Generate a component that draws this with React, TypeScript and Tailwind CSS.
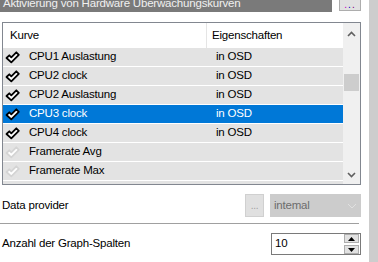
import React from "react";

const rows = [
  { name: "CPU1 Auslastung", prop: "in OSD", on: true },
  { name: "CPU2 clock", prop: "in OSD", on: true },
  { name: "CPU2 Auslastung", prop: "in OSD", on: true },
  { name: "CPU3 clock", prop: "in OSD", on: true, selected: true },
  { name: "CPU4 clock", prop: "in OSD", on: true },
  { name: "Framerate Avg", prop: "", on: false },
  { name: "Framerate Max", prop: "", on: false },
  { name: "", prop: "", on: false },
];

const Check = ({ on }: { on: boolean }) => (
  <svg width="15" height="13" viewBox="0 0 15 13" className="shrink-0">
    <path
      d="M1.5 7 L4.3 4.3 L6.3 6.3 L11.3 1.3 L13.8 3.8 L6.3 11.3 Z"
      fill="white"
      stroke={on ? "#000" : "#d4d4d4"}
      strokeWidth="1.8"
      strokeLinejoin="round"
    />
  </svg>
);

export default function App() {
  return (
    <div
      className="flex w-[378px] h-[262px] overflow-hidden bg-white text-[11.5px] tracking-[-0.2px] text-black"
      style={{ fontFamily: '"Liberation Sans", Arial, sans-serif' }}
    >
      <div className="w-[369px] flex flex-col">
        {/* title bar */}
        <div className="flex h-[12px] items-start">
          <div className="w-[332px] h-[12px] bg-[#7a7a7a] overflow-hidden pl-[3px]">
            <div className="mt-[-5px] leading-[16px] text-[#f0f0f0] whitespace-nowrap">
              Aktivierung von Hardware Überwachungskurven
            </div>
          </div>
          <div className="ml-[7px] w-[22px] h-[11px] border border-t-0 border-[#adadad] bg-[#e1e1e1] flex items-end justify-center pb-[1px] text-[10px] leading-[8px] tracking-[1px]">
            <span className="text-[#c000c0]">.</span>
            <span className="text-[#0000c0]">.</span>
            <span className="text-[#800080]">.</span>
          </div>
        </div>

        {/* list view */}
        <div className="mt-[10px] ml-[2px] w-[359px] h-[163px] border border-[#828790] flex overflow-hidden">
          <div className="flex-1 flex flex-col">
            <div className="flex h-[25px] items-center shrink-0">
              <div className="w-[204px] h-full border-r border-[#e5e5e5] pl-[7px] flex items-center">
                Kurve
              </div>
              <div className="pl-[5px]">Eigenschaften</div>
            </div>
            {rows.map((r, i) => (
              <div
                key={i}
                className={`flex h-[18px] shrink-0 mb-[1px] items-center ${
                  r.selected ? "bg-[#0078d7] text-white" : "bg-[#e3e3e3]"
                }`}
              >
                <div className="w-[204px] flex items-center pl-[2px]">
                  {r.name && <Check on={r.on} />}
                  <span className="ml-[9px]">{r.name}</span>
                </div>
                <div className="pl-[9px]">{r.prop}</div>
              </div>
            ))}
          </div>
          <div className="w-[17px] bg-[#f0f0f0] flex flex-col items-center">
            <div className="h-[17px] flex items-center justify-center mt-[2px]">
              <svg width="9" height="6" viewBox="0 0 9 6">
                <path d="M1 5 L4.5 1.5 L8 5" fill="none" stroke="#606060" strokeWidth="1.6" />
              </svg>
            </div>
            <div className="mt-[32px] w-[15px] h-[17px] bg-[#cdcdcd]" />
            <div className="flex-1" />
            <div className="h-[17px] flex items-center justify-center mb-[1px]">
              <svg width="9" height="6" viewBox="0 0 9 6">
                <path d="M1 1 L4.5 4.5 L8 1" fill="none" stroke="#606060" strokeWidth="1.6" />
              </svg>
            </div>
          </div>
        </div>

        {/* data provider */}
        <div className="mt-[9px] flex items-center h-[23px]">
          <div className="pl-[2px] flex-1">Data provider</div>
          <div className="w-[19px] h-[23px] bg-[#e0e0e0] border border-[#d0d0d0] text-[#a0a0a0] flex items-center justify-center text-[10px]">
            ...
          </div>
          <div className="ml-[6px] mr-[8px] w-[91px] h-[23px] bg-[#cccccc] flex items-center justify-between pl-[4px] pr-[4px] text-[#6d6d6d]">
            <span>intemal</span>
            <svg width="10" height="6" viewBox="0 0 10 6">
              <path d="M1 1 L5 5 L9 1" fill="none" stroke="#e0e0e0" strokeWidth="1" />
            </svg>
          </div>
        </div>

        <div className="mt-[6px] w-[359px] h-px bg-[#a0a0a0]" />

        {/* graph columns */}
        <div className="mt-[9px] flex items-center h-[22px]">
          <div className="pl-[2px] flex-1">Anzahl der Graph-Spalten</div>
          <div className="mr-[8px] w-[90px] h-[22px] border border-[#7a7a7a] flex items-center">
            <span className="pl-[3px] flex-1">10</span>
            <div className="flex flex-col gap-[2px] mr-[1px]">
              <div className="w-[15px] h-[9px] border border-[#adadad] bg-[#e1e1e1] flex items-center justify-center">
                <svg width="7" height="4" viewBox="0 0 7 4">
                  <path d="M0 4 L3.5 0 L7 4 Z" fill="#000" />
                </svg>
              </div>
              <div className="w-[15px] h-[9px] border border-[#adadad] bg-[#e1e1e1] flex items-center justify-center">
                <svg width="7" height="4" viewBox="0 0 7 4">
                  <path d="M0 0 L3.5 4 L7 0 Z" fill="#000" />
                </svg>
              </div>
            </div>
          </div>
        </div>
      </div>
      <div className="w-[9px] bg-[#cdcdcd]" />
    </div>
  );
}
